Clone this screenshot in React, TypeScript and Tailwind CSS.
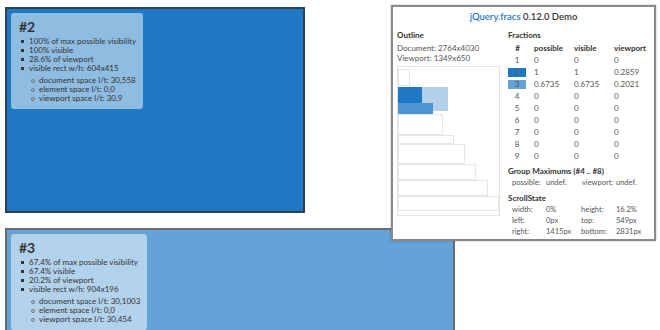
import React from "react";

const font = { fontFamily: 'Lato, "Open Sans", "DejaVu Sans", sans-serif' };

type Info = {
    id: string;
    items: string[];
    subs: string[];
};

const InfoCard = ({ info }: { info: Info }) => {
    return (
        <div className="whitespace-nowrap rounded-[3px] bg-white/50 px-2 pt-[6px] pb-[6px] text-[#333]" style={font}>
            <div className="text-[14px] font-bold leading-[15px]">{info.id}</div>
            <ul className="mt-[3px] text-[8px] leading-[9px]">
                {info.items.map((t) => (
                    <li key={t} className="flex items-center">
                        <span className="mr-[5px] ml-[2px] inline-block h-[3px] w-[3px] shrink-0 bg-[#333]"></span>
                        {t}
                    </li>
                ))}
            </ul>
            <ul className="mt-[3px] pl-[12px] text-[8px] leading-[9px]">
                {info.subs.map((t) => (
                    <li key={t} className="flex items-center">
                        <span className="mr-[4px] inline-block h-[4px] w-[4px] shrink-0 rounded-full border border-[#777]"></span>
                        {t}
                    </li>
                ))}
            </ul>
        </div>
    );
};

const rows = [
    ["1", "0", "0", "0"],
    ["2", "1", "1", "0.2859"],
    ["3", "0.6735", "0.6735", "0.2021"],
    ["4", "0", "0", "0"],
    ["5", "0", "0", "0"],
    ["6", "0", "0", "0"],
    ["7", "0", "0", "0"],
    ["8", "0", "0", "0"],
    ["9", "0", "0", "0"],
];

const outlineRects = [
    { w: 45, h: 21 },
    { w: 56, h: 9 },
    { w: 67, h: 20 },
    { w: 78, h: 16 },
    { w: 90, h: 16 },
    { w: 101, h: 15 },
];

const Outline = () => {
    return (
        <div className="relative mt-[3px] h-[150px] w-[103px] border border-[#e3e3e3] pt-[2px]">
            <div className="h-[17px] w-[12px] border border-[#e6e6e6]"></div>
            <div className="h-[28px]"></div>
            {outlineRects.map((r, i) => (
                <div
                    key={i}
                    className="border border-[#e6e6e6]"
                    style={{ width: r.w, height: r.h }}
                ></div>
            ))}
            {/* viewport + element overlays */}
            <div className="absolute left-0 top-[20px] h-[24px] w-[50px] bg-[#b1d1eb]"></div>
            <div className="absolute left-0 top-[20px] h-[16px] w-[24px] bg-[#1f78c3]"></div>
            <div className="absolute left-0 top-[36px] h-[11px] w-[35px] bg-[#4f93d0]"></div>
        </div>
    );
};

const Panel = () => {
    return (
        <div
            className="absolute left-[391px] top-[5px] h-[236px] w-[265px] whitespace-nowrap border-2 border-[#8a8a8a] bg-white px-[4px] pt-[3px] text-[#555] shadow-[0_0_2px_rgba(0,0,0,0.3)]"
            style={font}
        >
            <div className="text-center text-[9.5px] font-semibold leading-[14px]">
                <span className="text-[#1f78c3]">jQuery.fracs</span> <span className="text-[#333]">0.12.0 Demo</span>
            </div>
            <div className="mt-[6px] flex">
                <div className="w-[111px]">
                    <div className="text-[8px] font-bold leading-[10px] text-[#333]">Outline</div>
                    <div className="mt-[3px] text-[8px] leading-[10px]">Document: 2764x4030</div>
                    <div className="text-[8px] leading-[10px]">Viewport: 1349x650</div>
                    <Outline />
                </div>
                <div className="flex-1">
                    <div className="text-[8px] font-bold leading-[10px] text-[#333]">Fractions</div>
                    <div className="mt-[2px] text-[8px]">
                        <div className="flex h-[12px] items-center font-bold text-[#333]">
                            <div className="w-[26px] pr-[7px] text-center">#</div>
                            <div className="w-[40px]">possible</div>
                            <div className="w-[40px]">visible</div>
                            <div>viewport</div>
                        </div>
                        {rows.map((r) => (
                            <div key={r[0]} className="flex h-[12px] items-center">
                                <div className="w-[26px] pr-[8px]">
                                    <div
                                        className={
                                            r[0] === "2"
                                                ? "h-[9px] w-[18px] bg-[#1f78c3] text-center leading-[9px]"
                                                : r[0] === "3"
                                                ? "h-[9px] w-[18px] bg-[#64a3d7] text-center leading-[9px]"
                                                : "h-[9px] w-[18px] text-center leading-[9px]"
                                        }
                                    >
                                        {r[0]}
                                    </div>
                                </div>
                                <div className="w-[40px]">{r[1]}</div>
                                <div className="w-[40px]">{r[2]}</div>
                                <div>{r[3]}</div>
                            </div>
                        ))}
                    </div>
                    <div className="mt-[4px] text-[8px] font-bold leading-[10px] text-[#333]">Group Maximums (#4 .. #8)</div>
                    <div className="mt-[1px] grid grid-cols-[34px_36px_34px_30px] pl-[4px] text-[7.5px] leading-[11px]">
                        <div>possible:</div>
                        <div>undef.</div>
                        <div>viewport:</div>
                        <div>undef.</div>
                    </div>
                    <div className="mt-[5px] text-[8px] font-bold leading-[10px] text-[#333]">ScrollState</div>
                    <div className="mt-[1px] grid grid-cols-[34px_35px_35px_30px] pl-[4px] text-[7.5px] leading-[11px]">
                        <div>width:</div>
                        <div>0%</div>
                        <div>height:</div>
                        <div>16.2%</div>
                        <div>left:</div>
                        <div>0px</div>
                        <div>top:</div>
                        <div>549px</div>
                        <div>right:</div>
                        <div>1415px</div>
                        <div>bottom:</div>
                        <div>2831px</div>
                    </div>
                </div>
            </div>
        </div>
    );
};

export default function App() {
    const two: Info = {
        id: "#2",
        items: ["100% of max possible visibility", "100% visible", "28.6% of viewport", "visible rect w/h: 604x415"],
        subs: ["document space l/t: 30,558", "element space l/t: 0,0", "viewport space l/t: 30,9"],
    };
    const three: Info = {
        id: "#3",
        items: ["67.4% of max possible visibility", "67.4% visible", "20.2% of viewport", "visible rect w/h: 904x196"],
        subs: ["document space l/t: 30,1003", "element space l/t: 0,0", "viewport space l/t: 30,454"],
    };

    return (
        <div className="relative h-[330px] w-[660px] overflow-hidden bg-white">
            <div className="flex flex-col gap-[15px] pl-[5px] pt-[7px]">
                <div className="h-[206px] w-[300px] border-2 border-[#2b3f55] bg-[#1f78c3] p-1">
                    <div className="w-[132px]">
                        <InfoCard info={two} />
                    </div>
                </div>
                <div className="h-[140px] w-[450px] border-2 border-[#6b6b6b] bg-[#64a3d7] p-1">
                    <div className="w-[136px]">
                        <InfoCard info={three} />
                    </div>
                </div>
            </div>
            <Panel />
        </div>
    );
}
